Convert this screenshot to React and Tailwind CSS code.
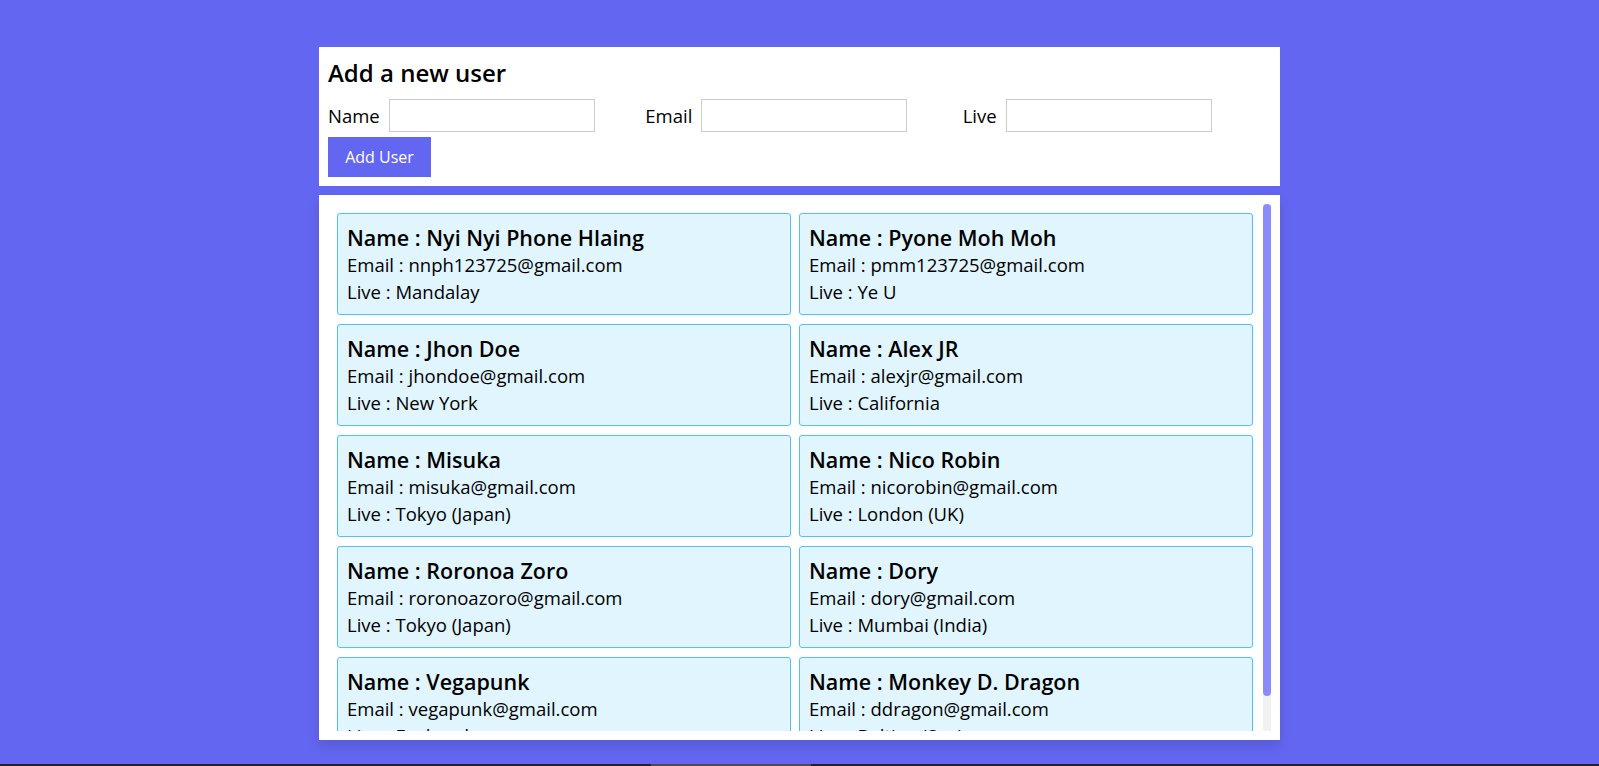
import React, { useState } from 'react';

const initialUsers = [
  { name: 'Nyi Nyi Phone Hlaing', email: 'nnph123725@gmail.com', live: 'Mandalay' },
  { name: 'Pyone Moh Moh', email: 'pmm123725@gmail.com', live: 'Ye U' },
  { name: 'Jhon Doe', email: 'jhondoe@gmail.com', live: 'New York' },
  { name: 'Alex JR', email: 'alexjr@gmail.com', live: 'California' },
  { name: 'Misuka', email: 'misuka@gmail.com', live: 'Tokyo (Japan)' },
  { name: 'Nico Robin', email: 'nicorobin@gmail.com', live: 'London (UK)' },
  { name: 'Roronoa Zoro', email: 'roronoazoro@gmail.com', live: 'Tokyo (Japan)' },
  { name: 'Dory', email: 'dory@gmail.com', live: 'Mumbai (India)' },
  { name: 'Vegapunk', email: 'vegapunk@gmail.com', live: 'Egghead' },
  { name: 'Monkey D. Dragon', email: 'ddragon@gmail.com', live: 'Baltigo (Sea)' },
];

const Field = ({ label, value, onChange }) => (
  <div className="flex items-center gap-[9px]">
    <label className="text-[18.5px]">{label}</label>
    <input
      value={value}
      onChange={(e) => onChange(e.target.value)}
      className="w-[206px] h-[33px] border border-[#cccccc] bg-white outline-none px-2"
    />
  </div>
);

const UserCard = ({ user }) => (
  <div className="h-[102px] border border-[#4fc3f7] rounded-[3px] bg-[#e1f5fe] p-[9px] overflow-hidden">
    <h3 className="text-[21.5px] leading-[29px] font-semibold whitespace-nowrap">Name : {user.name}</h3>
    <p className="text-[18.5px] leading-[26.5px] whitespace-nowrap">Email : {user.email}</p>
    <p className="text-[18.5px] leading-[26.5px] whitespace-nowrap">Live : {user.live}</p>
  </div>
);

export default function App() {
  const [users, setUsers] = useState(initialUsers);
  const [form, setForm] = useState({ name: '', email: '', live: '' });

  const addUser = () => {
    if (!form.name) return;
    setUsers([...users, form]);
    setForm({ name: '', email: '', live: '' });
  };

  return (
    <div className="h-[766px] flex flex-col bg-[#6366f1] text-black font-['Open_Sans',sans-serif]">
      <main className="flex-1 overflow-hidden">
        {/* form */}
        <div className="w-[961px] mx-auto mt-[47px] bg-white pl-[9px] pt-[9px] pb-[9px]">
          <h2 className="text-[24px] leading-[33px] font-semibold">Add a new user</h2>
          <div className="grid grid-cols-3 mt-[10px]">
            <Field label="Name" value={form.name} onChange={(v) => setForm({ ...form, name: v })} />
            <Field label="Email" value={form.email} onChange={(v) => setForm({ ...form, email: v })} />
            <Field label="Live" value={form.live} onChange={(v) => setForm({ ...form, live: v })} />
          </div>
          <button
            onClick={addUser}
            className="mt-[5px] w-[103px] h-[40px] bg-[#6366f1] text-white text-[16px]"
          >
            Add User
          </button>
        </div>

        {/* list */}
        <div className="w-[961px] mx-auto mt-[9px] bg-white p-[9px] flex shadow-[0_6px_12px_rgba(0,0,0,0.12)]">
          <div className="flex-1 h-[527px] overflow-y-auto pl-[9px] pr-[10px] py-[9px] [scrollbar-width:none]">
            <div className="grid grid-cols-2 gap-x-2 gap-y-[9px]">
              {users.map((u, i) => (
                <UserCard key={i} user={u} />
              ))}
            </div>
          </div>
          {/* scrollbar */}
          <div className="w-2 h-[527px] bg-[#f1f1f1]">
            <div className="h-[492px] rounded-full bg-[#8b8bf9]" />
          </div>
        </div>
      </main>
      <div className="h-[2px] bg-[#222222]">
        <div className="ml-[651px] w-[160px] h-full bg-[#4d4d4d]" />
      </div>
    </div>
  );
}
